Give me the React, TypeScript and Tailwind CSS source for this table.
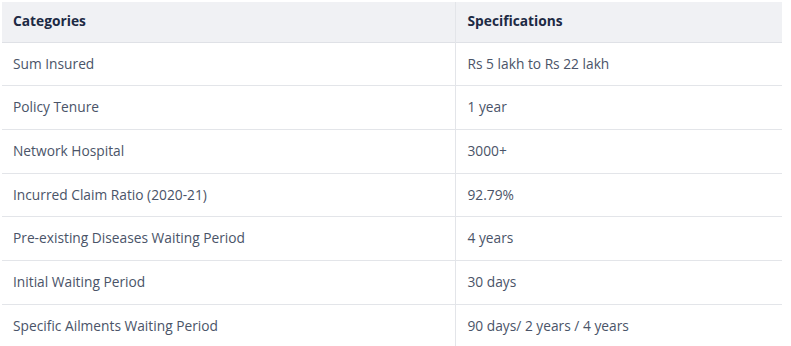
const rows: [string, string][] = [
  ["Sum Insured", "Rs 5 lakh to Rs 22 lakh"],
  ["Policy Tenure", "1 year"],
  ["Network Hospital", "3000+"],
  ["Incurred Claim Ratio (2020-21)", "92.79%"],
  ["Pre-existing Diseases Waiting Period", "4 years"],
  ["Initial Waiting Period", "30 days"],
  ["Specific Ailments Waiting Period", "90 days/ 2 years / 4 years"],
];

export default function App() {
  return (
    <div className="w-[791px] h-[346px] overflow-hidden bg-white pt-[2px] pl-[2px] font-['Open_Sans',sans-serif]">
      <table className="w-[780px] border-collapse text-[13.75px]">
        <thead>
          <tr className="bg-[#f0f1f4] border-b border-[#dfe1e6]">
            <th className="h-[40px] w-[453px] pl-[11px] text-left font-bold text-[#1d2a44] border-r border-[#e3e5e9]">
              Categories
            </th>
            <th className="pl-[12px] text-left font-bold text-[#1d2a44]">Specifications</th>
          </tr>
        </thead>
        <tbody>
          {rows.map(([cat, spec], i) => (
            <tr key={cat} className={i < rows.length - 1 ? "border-b border-[#e3e5e9]" : ""}>
              <td className="h-[43.7px] pl-[11px] text-[#4a5468] border-r border-[#e3e5e9]">{cat}</td>
              <td className="pl-[12px] text-[#4a5468]">{spec}</td>
            </tr>
          ))}
        </tbody>
      </table>
    </div>
  );
}
